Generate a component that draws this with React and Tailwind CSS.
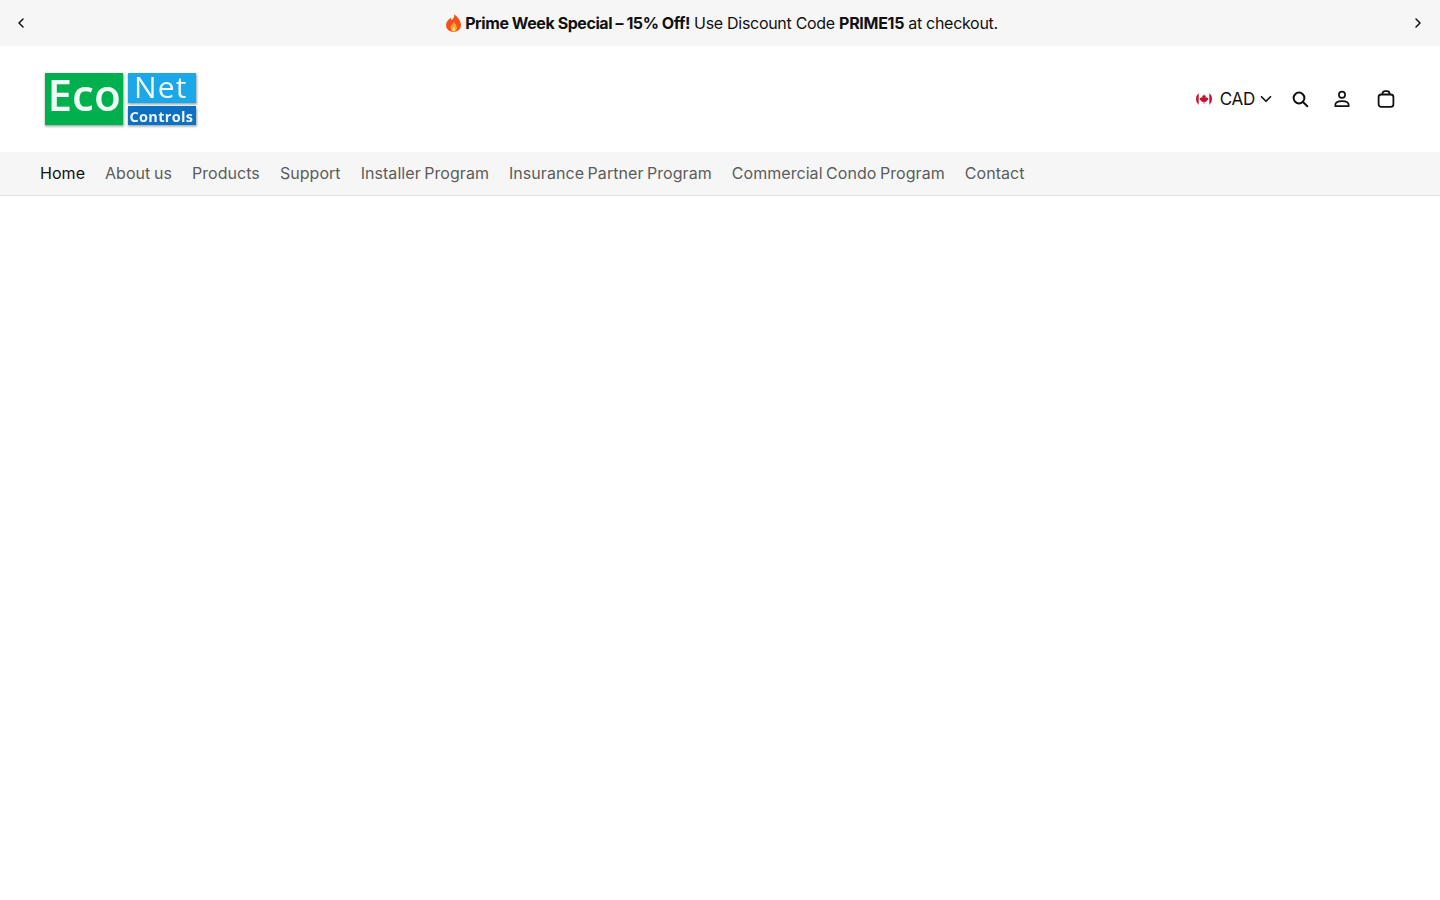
import React from "react";
import { ChevronLeft, ChevronRight, ChevronDown } from "lucide-react";

const navLinks = [
  "Home",
  "About us",
  "Products",
  "Support",
  "Installer Program",
  "Insurance Partner Program",
  "Commercial Condo Program",
  "Contact",
];

function Flame() {
  return (
    <svg width="19" height="20" viewBox="0 0 18 18" className="shrink-0">
      <path d="M9.6 0.6c.5 2.8-1 4.2-2.3 5.700-.5-.8-.7-1.500-.7-2.300C4 5.700 1.900 8 1.900 11c0 3.800 3.100 6.500 7.100 6.500s7.100-2.700 7.100-6.500c0-4.700-3.600-8.200-6.500-10.400z" fill="#f4511e" />
      <path d="M9.200 7.500c.2 1.900-2.900 3.100-2.900 6 0 2 1.200 3.600 2.800 3.600 1.900 0 3.100-1.500 3.100-3.400 0-2.600-1.800-4.500-3-6.200z" fill="#ffa726" />
      <path d="M9.200 12.200c0 1-1.100 1.500-1.100 2.900 0 1.100.5 1.900 1.100 1.900.8 0 1.300-.8 1.300-1.900 0-1.300-.8-2-1.300-2.900z" fill="#ffe082" />
    </svg>
  );
}

function Logo() {
  const logoFont = { fontFamily: '"Open Sans", sans-serif' };
  return (
    <svg width="156" height="58" viewBox="0 0 156 58" className="block overflow-visible">
      <defs>
        <filter id="logoShadow" x="-5%" y="-5%" width="110%" height="115%">
          <feGaussianBlur stdDeviation="0.9" />
        </filter>
        <filter id="logoSoft" x="-5%" y="-5%" width="110%" height="110%">
          <feGaussianBlur stdDeviation="0.35" />
        </filter>
      </defs>
      <g fill="#9aa5a0" filter="url(#logoShadow)">
        <rect x="1" y="4" width="79" height="52.500" />
        <rect x="84" y="4" width="69" height="30.500" />
        <rect x="84" y="38" width="69" height="18.500" />
      </g>
      <g filter="url(#logoSoft)">
        <rect x="1" y="3" width="78" height="52" fill="#00b050" />
        <rect x="84" y="3" width="68" height="30" fill="#1aa7e8" />
        <rect x="84" y="36" width="68" height="19" fill="#0f6fc0" />
        <text x="3.500" y="41" fill="#effff6" fontSize="44" fontWeight="600" style={logoFont}>
          Eco
        </text>
        <text x="90" y="28" fill="#effaff" fontSize="30" fontWeight="500" letterSpacing="1.200" style={logoFont}>
          Net
        </text>
        <text x="85.500" y="51.500" fill="#eef7ff" fontSize="14.500" fontWeight="700" letterSpacing="0.300" style={logoFont}>
          Controls
        </text>
      </g>
    </svg>
  );
}

function CanadaFlag() {
  return (
    <svg width="18" height="18" viewBox="0 0 18 18" className="shrink-0">
      <circle cx="9" cy="9" r="8" fill="#fff" />
      <path d="M3.700 3a8 8 0 0 0 0 12z" fill="#c8102e" />
      <path d="M14.300 3a8 8 0 0 1 0 12z" fill="#c8102e" />
      <path d="M9 4.200l1 1.800.9-.4-.4 2.400 1.200-1 .3.900 1.300-.2-.4 1.400.5.300-2.200 1.800.2.800-2-.2v2H8.600v-2l-2 .2.200-.8-2.200-1.800.5-.3-.4-1.400 1.300.2.300-.9 1.200 1-.4-2.400.9.400z" fill="#c8102e" />
    </svg>
  );
}

function SearchIcon() {
  return (
    <svg width="18" height="18" viewBox="0 0 18 18" fill="none" stroke="#111" strokeWidth="2">
      <circle cx="8" cy="8" r="5.400" />
      <path d="M12 12l4.300 4.300" strokeLinecap="round" />
    </svg>
  );
}

function UserIcon() {
  return (
    <svg width="20" height="20" viewBox="0 0 20 20" fill="none" stroke="#111" strokeWidth="1.700">
      <circle cx="10" cy="5.800" r="3.100" />
      <path d="M3.300 17.100v-1c0-2.500 2.700-4 6.700-4s6.700 1.500 6.700 4v1z" strokeLinejoin="round" />
    </svg>
  );
}

function BagIcon() {
  return (
    <svg width="20" height="20" viewBox="0 0 20 20" fill="none" stroke="#111" strokeWidth="1.800">
      <rect x="2.600" y="5.500" width="14.800" height="12.300" rx="2.600" />
      <path d="M6.500 5.500V4.500c0-1.400 1-2.400 2.500-2.400h2c1.500 0 2.500 1 2.500 2.400v1" />
    </svg>
  );
}

export default function App() {
  return (
    <div className="min-h-[900px] bg-white text-[#111] font-['Inter',sans-serif]">
      <div className="flex h-[46px] items-center justify-between bg-[#f6f6f6] pl-[13px] pr-[14px]">
        <ChevronLeft size={16} strokeWidth={2.250} color="#111" />
        <div className="flex items-center pl-[3px] text-[16px] tracking-[-0.3px] text-[#111]">
          <Flame />
          <p className="ml-[2px] whitespace-pre">
            <strong className="font-bold tracking-[-0.43px]">Prime Week Special – 15% Off!</strong> Use Discount Code{" "}
            <strong className="font-bold tracking-[-0.3px]">PRIME15</strong> at checkout.
          </p>
        </div>
        <ChevronRight size={16} strokeWidth={2.250} color="#111" />
      </div>

      <header className="flex h-[106px] items-center justify-between pl-[44px] pr-[44px]">
        <Logo />
        <div className="flex items-center">
          <div className="flex items-center">
            <CanadaFlag />
            <span className="ml-[7px] pt-[1px] text-[17px] tracking-[-0.3px]">CAD</span>
            <ChevronDown size={18} strokeWidth={2.250} className="ml-[2px]" />
          </div>
          <span className="ml-[16px]"><SearchIcon /></span>
          <span className="ml-[23px]"><UserIcon /></span>
          <span className="ml-[24px]"><BagIcon /></span>
        </div>
      </header>

      <nav className="flex h-[44px] items-center gap-[20px] border-b border-[#e2e2e2] bg-[#f6f6f6] pb-[2px] pl-[40px] text-[16px] tracking-[0.05px] [word-spacing:-1px] text-[#5c5c5c]">
        {navLinks.map((link, i) => (
          <a key={link} href="#" className={i === 0 ? "text-[#111]" : ""}>
            {link}
          </a>
        ))}
      </nav>
    </div>
  );
}
